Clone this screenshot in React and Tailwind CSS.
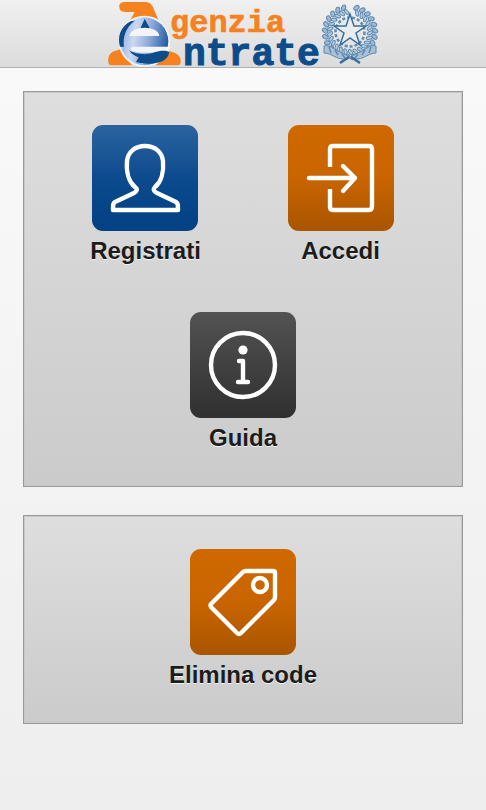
import React from "react";

const WREATH = Array.from({ length: 24 }, (_, i) => -75 + (i * 330) / 23);

function Logo() {
  return (
    <svg
      viewBox="0 0 272 67"
      className="h-[67px] w-[272px] overflow-visible"
      role="img"
      aria-label="Agenzia Entrate"
    >
      <defs>
        <linearGradient id="globe" x1="0" y1="0.3" x2="1" y2="0.5">
          <stop offset="0" stopColor="#8fb0dc" />
          <stop offset="0.3" stopColor="#cbd8f1" />
          <stop offset="0.6" stopColor="#8fabdb" />
          <stop offset="1" stopColor="#1f5ca2" />
        </linearGradient>
      </defs>
      <g transform="translate(-7 0) scale(0.3333)">
        <path
          d="M58 22 C56 11 64 6 76 6 H134 C149 6 155 12 160 24 L176 62 L88 66 L104 36 H76 C64 36 59 31 58 22Z"
          fill="#f5821f"
        />
        <path d="M25 186 C23 166 32 156 46 152 L68 146 L96 196 H36 C29 196 25 193 25 186Z" fill="#f5821f" />
        <path d="M242 186 C244 170 232 160 216 156 L198 150 L168 196 H230 C238 196 242 193 242 186Z" fill="#f5821f" />
        <circle cx="133" cy="124" r="77" fill="#f4f4f6" />
        <circle cx="133" cy="124" r="72" fill="url(#globe)" />
        <path d="M92 64 C60 80 52 112 60 140 L72 140 C68 112 76 84 104 62Z" fill="#0c4c8a" />
        <path d="M122 84 L134 56 L149 84Z" fill="#0c4c8a" />
        <path d="M88 108 C92 76 174 74 178 108Z" fill="#f4f4f6" />
        <path d="M96 140 H212 L206 156 C180 154 120 166 92 150Z" fill="#f4f4f6" />
        <path
          d="M88 151 C106 164 146 166 164 157 C178 151 200 150 207 156 C208 166 198 178 187 184 C162 196 120 190 108 186 L116 172 C104 168 92 160 88 151Z"
          fill="#0c4c8a"
        />
      </g>
      <text
        x="63"
        y="32"
        fontSize="32"
        fontWeight="bold"
        fill="#f5821f"
        stroke="#f5821f"
        strokeWidth="0.6"
        className="font-['Liberation_Mono',monospace]"
      >
        genzia
      </text>
      <text
        x="76"
        y="65"
        fontSize="38"
        fontWeight="bold"
        fill="#0c4c8a"
        stroke="#0c4c8a"
        strokeWidth="1"
        className="font-['Liberation_Mono',monospace]"
      >
        ntrate
      </text>
      <g transform="translate(243 32)" fill="none" stroke="#5f8bb3">
        {WREATH.map((a) => (
          <g key={a} transform={`rotate(${a})`} strokeWidth="1">
            <ellipse cx="25" cy="0" rx="3" ry="2" transform="rotate(35 25 0)" fill="#9fb9d2" />
            <ellipse cx="20" cy="2" rx="3" ry="1.5" transform="rotate(-25 20 2)" fill="#b7cadc" />
          </g>
        ))}
        <circle r="14.5" strokeWidth="2.5" strokeDasharray="3 2" />
        <path
          d="M0 -18 L4 -6 L16 -6 L6 1 L10 13 L0 6 L-10 13 L-6 1 L-16 -6 L-4 -6Z"
          fill="#e9ecef"
          stroke="#3a6d9c"
          strokeWidth="1.5"
        />
        <path
          d="M-26 14 C-20 12 -14 19 -8 21 L0 25 L8 21 C14 19 20 12 26 14 L26 21 C18 21 14 28 4 27 L0 26 L-4 27 C-14 28 -18 21 -26 21Z"
          fill="#a9c0d6"
          strokeWidth="1"
        />
        <path d="M-21 15l2 6M-15 18l3 5M-8 22l3 4M8 22l-3 4M15 18l-3 5M21 15l-2 6" strokeWidth="1.5" />
        <path d="M-1 25l-9 6M1 25l9 6" stroke="#3a6d9c" strokeWidth="2.5" />
      </g>
    </svg>
  );
}

function Glyph({ children }) {
  return (
    <svg
      viewBox="0 0 106 106"
      className="size-full"
      fill="none"
      stroke="#fff"
      strokeWidth="4.4"
      strokeLinecap="round"
      strokeLinejoin="round"
      aria-hidden="true"
    >
      {children}
    </svg>
  );
}

function Tile({ label, tone, children }) {
  return (
    <button type="button" className="flex flex-col items-center">
      <span className={`block size-[106px] overflow-hidden rounded-[11px] bg-linear-to-b ${tone}`}>
        <Glyph>{children}</Glyph>
      </span>
      <span className="text-2xl leading-10 font-bold whitespace-nowrap text-[#1c1c1c] [text-shadow:0_1px_0_#f3f3f3]">
        {label}
      </span>
    </button>
  );
}

const PANEL =
  "border border-[#999] bg-linear-to-b from-[#dedede] to-[#cbcbcb] px-6 pt-[33px] pb-7 shadow-[inset_0_0_0_1px_#c8c8c8]";
const ORANGE = "from-[#cf6800] via-[#c96500] to-[#a95500]";

export default function App() {
  return (
    <div className="min-h-screen bg-linear-to-b from-[#fafafa] to-[#eeeeee] font-['Liberation_Sans',Arial,sans-serif]">
      <header className="flex justify-center border-b border-[#b0b0b0] bg-linear-to-b from-[#f0f0f0] to-[#dcdcdc]">
        <Logo />
      </header>
      <main className="flex flex-col gap-7 px-[23px] pt-[23px]">
        <section className={PANEL}>
          <div className="grid grid-cols-2 justify-items-center gap-y-[41px]">
            <Tile label="Registrati" tone="from-[#2a639f] via-[#0c4a8e] to-[#034084]">
              <path d="M53 21 C43 21 36 27 35 36 C34 47 37 57 43 62 C46 64 45 66 42 68 L23 77 C21 78 21 80 21 85 H86 C86 80 86 78 84 77 L65 68 C61 66 61 64 63 62 C69 57 72 47 71 36 C70 27 63 21 53 21Z" />
            </Tile>
            <Tile label="Accedi" tone={ORANGE}>
              <path d="M42 42 V24 Q42 21 45 21 H81 Q84 21 84 24 V81 Q84 85 81 85 H45 Q42 85 42 82 V64" strokeLinecap="butt" />
              <path d="M21 53 H67 M55 41 L67 53 L55 66" />
            </Tile>
            <div className="col-span-2">
              <Tile label="Guida" tone="from-[#535353] to-[#303030]">
                <circle cx="53" cy="53" r="32" />
                <circle cx="53" cy="38" r="4.6" fill="#fff" stroke="none" />
                <path d="M49 49 H53 V70 M48 70 H58" />
              </Tile>
            </div>
          </div>
        </section>
        <section className={PANEL}>
          <div className="flex justify-center">
            <Tile label="Elimina code" tone={ORANGE}>
              <path d="M56 22 H83 Q85 22 85 24 V48 Q85 50 84 51 L51 84 Q49 86 47 84 L21 58 Q20 56 21 55 L53 23 Q54 22 56 22Z" />
              <circle cx="70" cy="36" r="7" />
            </Tile>
          </div>
        </section>
      </main>
    </div>
  );
}
